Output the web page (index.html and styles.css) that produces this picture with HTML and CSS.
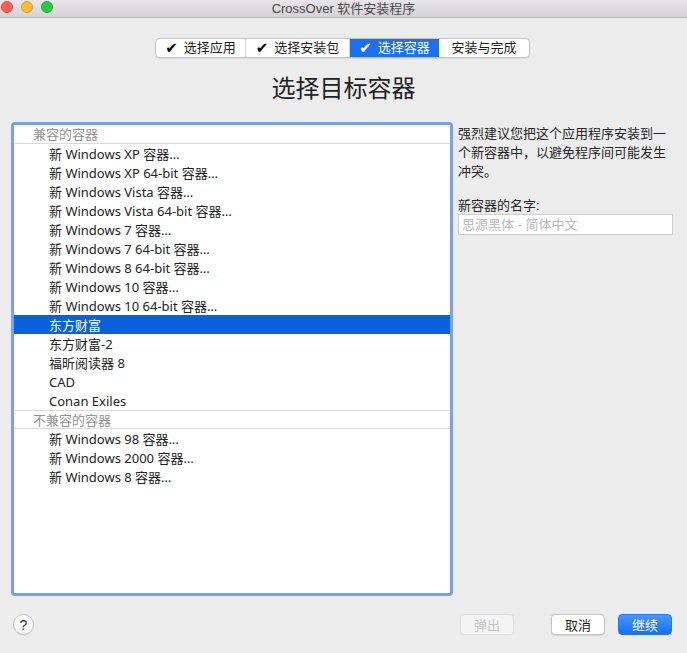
FILE: index.html
```html
<!DOCTYPE html>
<html lang="zh-CN">
<head>
<meta charset="utf-8">
<title>CrossOver 软件安装程序</title>
<link rel="stylesheet" href="styles.css">
</head>
<body>
<div class="window">
  <div class="titlebar">
    <div class="lights">
      <span class="light red"></span>
      <span class="light yellow"></span>
      <span class="light green"></span>
    </div>
    <div class="title">CrossOver 软件安装程序</div>
  </div>

  <div class="steps">
    <div class="seg s1"><span class="chk">✔</span>选择应用</div>
    <div class="seg s2"><span class="chk">✔</span>选择安装包</div>
    <div class="seg s3 active"><span class="chk">✔</span>选择容器</div>
    <div class="seg s4">安装与完成</div>
  </div>

  <h1 class="heading">选择目标容器</h1>

  <div class="main">
    <div class="list">
      <div class="group first">兼容的容器</div>
      <div class="row">新 Windows XP 容器…</div>
      <div class="row">新 Windows XP 64-bit 容器…</div>
      <div class="row">新 Windows Vista 容器…</div>
      <div class="row">新 Windows Vista 64-bit 容器…</div>
      <div class="row">新 Windows 7 容器…</div>
      <div class="row">新 Windows 7 64-bit 容器…</div>
      <div class="row">新 Windows 8 64-bit 容器…</div>
      <div class="row">新 Windows 10 容器…</div>
      <div class="row">新 Windows 10 64-bit 容器…</div>
      <div class="row selected">东方财富</div>
      <div class="row">东方财富-2</div>
      <div class="row">福昕阅读器 8</div>
      <div class="row">CAD</div>
      <div class="row">Conan Exiles</div>
      <div class="group">不兼容的容器</div>
      <div class="row">新 Windows 98 容器…</div>
      <div class="row">新 Windows 2000 容器…</div>
      <div class="row">新 Windows 8 容器…</div>
    </div>

    <div class="side">
      <p class="advice">强烈建议您把这个应用程序安装到一个新容器中，以避免程序间可能发生冲突。</p>
      <div class="label">新容器的名字:</div>
      <div class="input">思源黑体 - 简体中文</div>
    </div>
  </div>

  <div class="footer">
    <div class="help">?</div>
    <div class="spacer"></div>
    <div class="btn disabled">弹出</div>
    <div class="btn cancel">取消</div>
    <div class="btn primary">继续</div>
  </div>
</div>
</body>
</html>
```

FILE: styles.css
```css
* { box-sizing: border-box; }

html, body {
  margin: 0;
  padding: 0;
  background: #ececec;
}

body {
  font-family: "Liberation Sans", "Noto Sans CJK SC", sans-serif;
  font-size: 13px;
  color: #262626;
}

.window {
  width: 687px;
  height: 653px;
  background: #ececec;
  overflow: hidden;
}

.titlebar {
  position: relative;
  height: 18px;
  background: linear-gradient(#e8e6e8, #d4d2d4);
  border-bottom: 1px solid #b4b4b4;
  display: flex;
  align-items: center;
  justify-content: center;
}

.lights {
  position: absolute;
  left: 1px;
  top: 1px;
  display: flex;
  gap: 8px;
}

.light {
  width: 12px;
  height: 12px;
  border-radius: 50%;
  display: block;
}
.red { background: #fc5f57; border: 0.5px solid #de4a42; }
.yellow { background: #fdbc2e; border: 0.5px solid #dea225; }
.green { background: #2ac840; border: 0.5px solid #1cab2c; }

.title {
  font-size: 13px;
  color: #4a4a4a;
  line-height: 17px;
  margin-top: -1px;
}

.steps {
  margin: 20px 0 0 155px;
  width: 375px;
  height: 20px;
  display: flex;
  background: #fff;
  border: 1px solid #c4c4c4;
  border-radius: 4px;
  overflow: hidden;
  box-shadow: 0 0.5px 1px rgba(0,0,0,0.08);
}

.seg {
  height: 100%;
  display: flex;
  align-items: center;
  justify-content: center;
  font-size: 13px;
  color: #1e1e1e;
  border-right: 1px solid #d6d6d6;
  line-height: 18px;
}
.seg.s1 { width: 90px; }
.seg.s2 { width: 104px; }
.seg.s3 { width: 89px; }
.seg.s4 { flex: 1; border-right: none; }
.seg.active {
  background: #1b6ff2;
  color: #fff;
  border-right: none;
}

.chk {
  font-family: "DejaVu Sans", sans-serif;
  font-size: 15px;
  line-height: 18px;
  margin-right: 6px;
  color: #000;
}
.active .chk { color: #fff; }

.heading {
  margin: 13px 0 0 0;
  height: 35px;
  line-height: 35px;
  text-align: center;
  font-size: 24px;
  font-weight: normal;
  color: #222;
}

.main {
  margin-top: 16px;
  display: flex;
  height: 474px;
}

.list {
  margin-left: 11px;
  width: 442px;
  height: 474px;
  background: #fff;
  border: 3px solid #77a1ee;
  border-radius: 4px;
  overflow: hidden;
}

.group {
  height: 19px;
  line-height: 18px;
  padding-left: 19px;
  padding-top: 1px;
  color: #929292;
  border-top: 1px solid #dadada;
  border-bottom: 1px solid #dadada;
}
.group.first {
  border-top: none;
  line-height: 17px;
}

.row {
  height: 19px;
  line-height: 18px;
  padding-top: 1px;
  padding-left: 35px;
  color: #222;
  white-space: nowrap;
  font-family: "Noto Sans", "Noto Sans CJK SC", sans-serif;
}
.row.selected {
  background: #0b61dc;
  color: #fff;
}

.side {
  margin-left: 5px;
  width: 215px;
  padding-top: 2px;
}

.advice {
  margin: 0;
  line-height: 19px;
  font-size: 13px;
  color: #262626;
}

.label {
  margin-top: 16px;
  line-height: 17px;
  color: #262626;
}

.input {
  height: 21px;
  border: 1px solid #cccccc;
  background: #fff;
  color: #b9b9b9;
  line-height: 19px;
  padding-left: 3px;
}

.footer {
  margin-top: 18px;
  display: flex;
  align-items: center;
  padding: 0 15px 0 13px;
  height: 21px;
}

.help {
  width: 21px;
  height: 21px;
  border-radius: 50%;
  background: linear-gradient(#ffffff, #f6f6f6);
  border: 1px solid #c2c2c2;
  box-shadow: 0 0.5px 1px rgba(0,0,0,0.1);
  display: flex;
  align-items: center;
  justify-content: center;
  font-size: 14px;
  color: #2a2a2a;
}

.spacer { flex: 1; }

.btn {
  width: 54px;
  height: 21px;
  border-radius: 4px;
  display: flex;
  align-items: center;
  justify-content: center;
  font-size: 13px;
}
.btn.disabled {
  background: #f4f4f4;
  border: 1px solid #dedede;
  color: #c4c4c4;
}
.btn.cancel {
  margin-left: 37px;
  background: #fff;
  border: 1px solid #c4c4c4;
  color: #1e1e1e;
  box-shadow: 0 0.5px 1px rgba(0,0,0,0.1);
}
.btn.primary {
  margin-left: 13px;
  background: linear-gradient(#4a95fa, #1670f3);
  border: 1px solid #2a75ee;
  color: #fff;
}
```
